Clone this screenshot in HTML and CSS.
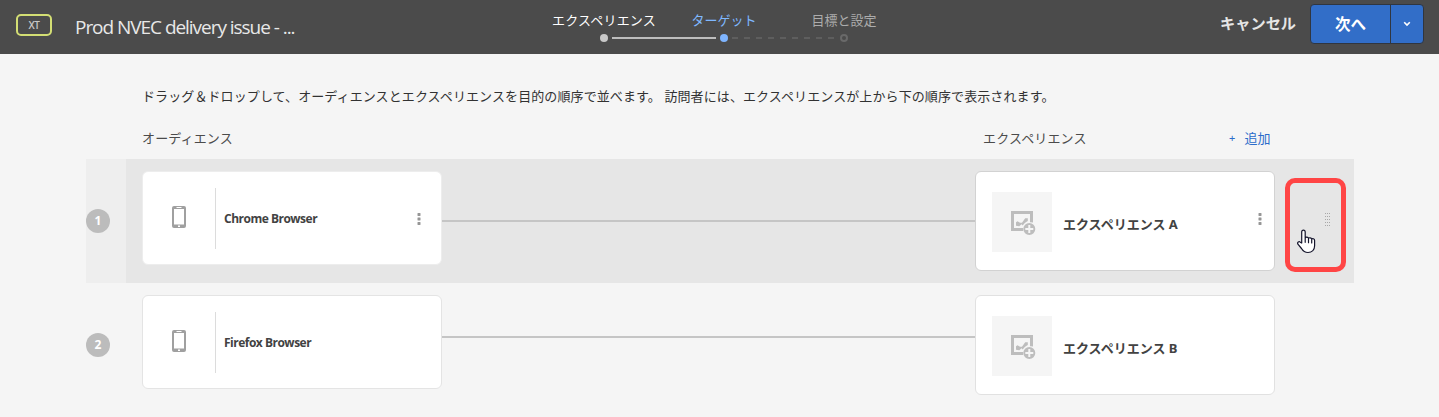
FILE: index.html
```html
<!DOCTYPE html>
<html lang="ja">
<head>
<meta charset="utf-8">
<title>Prod NVEC delivery issue</title>
<link rel="stylesheet" href="styles.css">
</head>
<body>
<svg width="0" height="0" class="defs">
  <symbol id="phone" viewBox="0 0 14 22"><path fill="#a0a0a0" fill-rule="evenodd" d="M2 0h10a2 2 0 0 1 2 2v18a2 2 0 0 1-2 2H2a2 2 0 0 1-2-2V2a2 2 0 0 1 2-2zM2 3v15.500h10V3zM4.500 1v1h5V1zM6 19.500v1.500h2v-1.500z"/></symbol>
  <symbol id="image-add" viewBox="0 0 26 26"><path fill="#bdbdbd" d="M0 0h22v11.500a7 7 0 0 0-3-.3V3H3v14h9.200a7 7 0 0 0 0 3H0z"/><path fill="#bdbdbd" d="M5 14.800v-3.600l1.500-.9 2.500 1.400h2l3.200-4.500h2.600v2.800l-2 1.200a8 8 0 0 0-3 3.300l-1.300-1.200-2.200 2z"/><path fill="#bdbdbd" fill-rule="evenodd" d="M18.300 12a6 6 0 1 1 0 12 6 6 0 0 1 0-12zm-1 2v3h-3v2h3v3h2v-3h3v-2h-3v-3z"/></symbol>
  <symbol id="more" viewBox="0 0 4 12"><path fill="#969696" d="M.8 0h2.400l.3.500v2l-.3.500H.8L.5 2.500v-2zM.8 4.500h2.400l.3.500v2l-.3.500H.8L.5 7V5zM.8 9h2.400l.3.500v2l-.3.500H.8l-.3-.5v-2z"/></symbol>
</svg>
<header class="topbar">
  <span class="badge">XT</span>
  <h1 class="title">Prod NVEC delivery issue - ...</h1>
  <nav class="steps">
    <div class="step done"><span>エクスペリエンス</span><i class="dot"></i></div>
    <div class="step current"><span>ターゲット</span><i class="dot"></i></div>
    <div class="step todo"><span>目標と設定</span><i class="dot"></i></div>
    <svg class="track" width="248" height="8" viewBox="0 0 248 8"><path d="M8 4h104" stroke="#bdbdbd" stroke-width="2"/><path d="M128 4h104" stroke="#666" stroke-width="1.500" stroke-dasharray="6 6"/></svg>
  </nav>
  <div class="actions">
    <span class="cancel">キャンセル</span>
    <div class="split"><button class="next">次へ</button><button class="arrow"><svg width="8" height="6" viewBox="0 0 8 6"><path d="M1.200 1.200 4 4l2.800-2.800" fill="none" stroke="#fff" stroke-width="1.600"/></svg></button></div>
  </div>
</header>
<main class="content">
  <p class="intro">ドラッグ＆ドロップして、オーディエンスとエクスペリエンスを目的の順序で並べます。 訪問者には、エクスペリエンスが上から下の順序で表示されます。</p>
  <div class="heads"><span class="aud-head">オーディエンス</span><span class="exp-head">エクスペリエンス</span><span class="add"><b>+</b>追加</span></div>
  <section class="row active">
    <div class="order"><span class="num">1</span></div>
    <div class="lane">
      <article class="card audience"><div class="device"><svg width="14" height="22"><use href="#phone"/></svg></div><strong>Chrome Browser</strong><svg class="more" width="4" height="12"><use href="#more"/></svg></article>
      <div class="link"></div>
      <article class="card experience"><div class="thumb"><svg width="26" height="26"><use href="#image-add"/></svg></div><strong>エクスペリエンス A</strong><svg class="more" width="4" height="12"><use href="#more"/></svg></article>
      <div class="handle">
        <svg width="8" height="15" viewBox="0 0 8 15"><path d="M1.500 1v13M3.500 1v13M5.500 1v13" stroke="#a8a8a8" stroke-width="1" stroke-dasharray="1 2"/></svg>
        <div class="highlight"></div>
        <svg class="pointer" width="20" height="26" viewBox="0 0 20 26"><path d="M4.700 14V3.200c0-2.700 3.500-2.700 3.500 0V9c.5-1.300 3-1.100 3.300.5.600-1.200 2.900-.9 3.200.7.700-1 2.900-.7 2.900 1.300v5.300c0 4-2.600 6.700-6.600 6.700-3.400 0-5.100-1.600-6.500-4L.9 15.200c-1-2 1.200-3.200 2.400-2zM8.200 8.500v4.800M11.500 9.800v3.900M14.700 10.700v3.300" fill="#fff" stroke="#14142b" stroke-width="1.200" stroke-linejoin="round" stroke-linecap="round"/></svg>
      </div>
    </div>
  </section>
  <section class="row">
    <div class="order"><span class="num">2</span></div>
    <div class="lane">
      <article class="card audience"><div class="device"><svg width="14" height="22"><use href="#phone"/></svg></div><strong>Firefox Browser</strong></article>
      <div class="link"></div>
      <article class="card experience"><div class="thumb"><svg width="26" height="26"><use href="#image-add"/></svg></div><strong>エクスペリエンス B</strong></article>
    </div>
  </section>
</main>
</body>
</html>
```
FILE: styles.css
```css
* { box-sizing: border-box; }
body { margin: 0; height: 417px; overflow: hidden; background: #f5f5f5; color: #323232; font: 13px/20px "Noto Sans", "Noto Sans CJK JP", sans-serif; }
.defs { position: absolute; }
.topbar { display: grid; grid-template-columns: 36px 469px 312px 1fr; height: 54px; padding: 0 15px 0 16px; background: #4b4b4b; }
.badge { width: 36px; height: 22px; margin-top: 14px; border: 2px solid #d3de74; border-radius: 5px; color: #c8c8c8; font: 600 10px/19px "Open Sans", sans-serif; letter-spacing: -0.5px; text-align: center; }
.title { margin: 0 0 0 23px; color: #e8e8e8; font: 400 19px/54px "Open Sans", sans-serif; letter-spacing: -1.040px; white-space: nowrap; }
.steps { position: relative; display: flex; margin-left: 23px; }
.step { display: flex; flex: 0 0 120px; flex-direction: column; align-items: center; padding-top: 10px; white-space: nowrap; }
.done { color: #fff; letter-spacing: 0.2px; }
.current { color: #7fb8ff; }
.todo { color: #acacac; }
.dot { width: 8px; height: 8px; margin-top: 4px; border-radius: 50%; background: #c8c8c8; }
.current .dot { background: #7fb5ff; }
.todo .dot { background: none; border: 2px solid #696969; }
.track { position: absolute; left: 60px; top: 34px; }
.actions { display: flex; justify-content: flex-end; align-items: flex-start; }
.cancel { margin: 13px 14px 0 0; color: #e6e6e6; font-size: 15.200px; font-weight: 600; }
.split { display: flex; width: 114px; height: 40px; margin-top: 4px; border: 1px solid #303640; border-radius: 4px; background: #326ec8; overflow: hidden; }
.split button { border: 0; padding: 0; background: none; color: #fff; font: 600 15.500px/38px "Noto Sans", "Noto Sans CJK JP", sans-serif; }
.next { width: 79px; }
.split .arrow { flex: 1; border-left: 1px solid #303640; display: flex; align-items: center; justify-content: center; }
.content { width: 1268px; margin-left: 86px; }
.intro { margin: 0; padding: 32px 0 0 56px; letter-spacing: 0.100px; white-space: nowrap; }
.heads { display: flex; margin: 22px 0 11px; padding-left: 56px; color: #4b4b4b; letter-spacing: 0.150px; }
.aud-head { width: 841px; }
.exp-head { width: 246px; }
.add { color: #2c6cca; }
.add b { margin-right: 9px; font-weight: 400; font-size: 11px; vertical-align: 1px; }
.row { display: flex; height: 124px; }
.order { display: flex; align-items: center; width: 40px; }
.num { width: 24px; height: 24px; border-radius: 50%; background: #bcbcbc; color: #fff; font: 700 12px/24px "Open Sans", sans-serif; text-align: center; }
.lane { display: flex; flex: 1; align-items: flex-start; padding: 12px 0 0 16px; }
.active .order { background: #eee; }
.active .lane { background: #e6e6e6; }
.card { display: flex; align-items: center; background: #fff; border: 1px solid #e4e4e4; border-radius: 6px; }
.card strong { flex: 1; color: #424242; white-space: nowrap; }
.audience { width: 300px; height: 94px; }
.active .audience { border-color: #ededed; }
.audience strong { padding: 2px 0 0 8px; font: 700 12px/20px "Open Sans", sans-serif; letter-spacing: -0.5px; }
.device { display: flex; width: 73px; height: 61px; padding: 0 0 2px 29px; align-items: center; border-right: 1px solid #dcdcdc; }
.more { margin: 2px 20px 0 0; }
.link { width: 533px; height: 2px; margin-top: 41px; background: #c5c5c5; }
.active .link { margin-top: 49px; }
.experience { width: 300px; height: 100px; padding-left: 16px; border-color: #e1e1e1; }
.active .experience { border-color: #d2d2d2; }
.experience strong { padding: 5px 0 0 11px; font-weight: 700; }
.experience .more { margin: -5px 12px 0 0; }
.thumb { display: flex; width: 60px; height: 60px; margin-top: 2px; padding: 4px 0 0 4px; align-items: center; justify-content: center; background: #f5f5f5; }
.handle { position: relative; width: 79px; height: 100px; padding: 41px 0 0 49px; }
.handle svg { display: block; }
.highlight { position: absolute; left: 10px; top: 7px; width: 61px; height: 94px; border: 5px solid #ff4545; border-radius: 10px; }
.pointer { position: absolute; left: 22px; top: 58px; }
```
